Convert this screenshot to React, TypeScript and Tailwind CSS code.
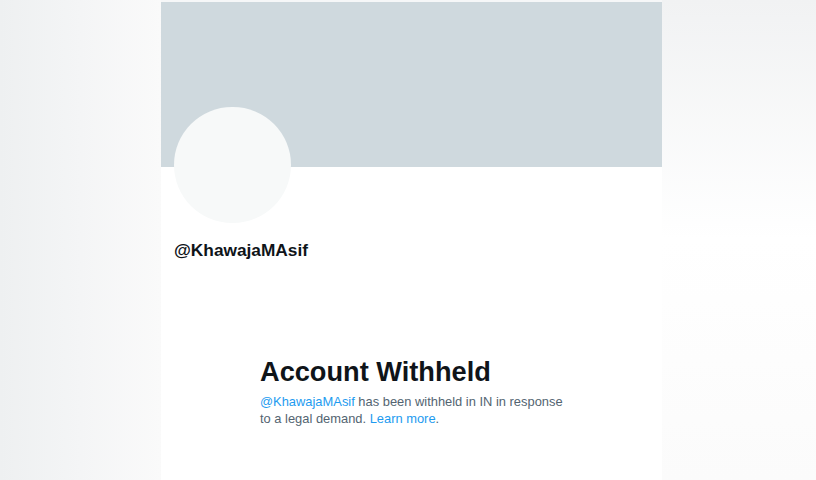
import React from 'react';

export default function App() {
  const handle = 'KhawajaMAsif';

  return (
    <div
      className="w-[816px] h-[480px] flex overflow-hidden bg-white"
      style={{ fontFamily: '"Liberation Sans", Arial, sans-serif' }}
    >
      {/* left blurred backdrop */}
      <div className="w-[161px] h-full bg-gradient-to-r from-[#eef0f1] via-[#f4f5f6] to-[#fafafa]" />

      {/* profile column */}
      <div className="w-[501px] h-full bg-white flex flex-col">
        <div className="h-[2px] bg-[#f6f7f8]" />
        <div className="h-[165px] bg-[#cfd9de]" />

        <div className="pl-[13px]">
          <div className="-mt-[60px] w-[117px] h-[116px] rounded-full bg-[#f7f9f9]" />
          <div className="mt-[17px] text-[17.3px] leading-[20px] font-bold text-[#0f1419]">
            @{handle}
          </div>
        </div>

        <div className="pl-[99px] mt-[96px]">
          <h1 className="text-[27.2px] leading-[32px] font-bold text-[#0f1419]">
            Account Withheld
          </h1>
          <p className="mt-[5px] text-[12.9px] leading-[17px] text-[#536471] whitespace-nowrap">
            <span className="text-[#1d9bf0]">@{handle}</span> has been withheld in IN in response
            <br />
            to a legal demand. <span className="text-[#1d9bf0]">Learn more</span>.
          </p>
        </div>
      </div>

      {/* right blurred backdrop */}
      <div className="flex-1 h-full bg-gradient-to-b from-[#f1f2f3] via-white to-[#fbfbfb]" />
    </div>
  );
}
